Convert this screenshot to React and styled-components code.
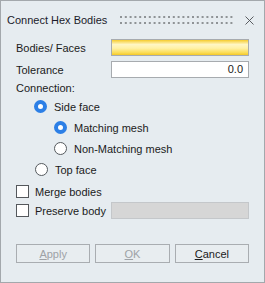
import React from "react";
import styled, { createGlobalStyle } from "styled-components";

const Global = createGlobalStyle`
  html, body { margin: 0; padding: 0; background: #e6ecf0; }
  * { box-sizing: border-box; }
`;

const Window = styled.div`
  width: 265px;
  height: 283px;
  border: 1px solid #a3a8ac;
  background: #e6ecf0;
  font-family: "Liberation Sans", Arial, sans-serif;
  font-size: 11px;
  color: #1b1b1b;
  display: flex;
  flex-direction: column;
`;

const TitleBar = styled.div`
  height: 38px;
  display: flex;
  align-items: center;
  padding: 0 10px 0 6px;
`;

const Title = styled.div`
  font-size: 11px;
  color: #1b1b2b;
`;

const Grip = styled.svg`
  margin-left: auto;
  margin-right: 12px;
  flex: none;
`;

const Close = styled.svg`
  flex: none;
`;

const Body = styled.div`
  padding: 0 15px;
  display: flex;
  flex-direction: column;
`;

const FieldRow = styled.div`
  display: grid;
  grid-template-columns: 95px 1fr;
  align-items: center;
  height: 17px;
  margin-top: ${(p) => p.$mt || 0}px;
`;

const Label = styled.div`
  white-space: nowrap;
`;

const Field = styled.div`
  height: 17px;
  border: 1px solid ${(p) => (p.$variant === "disabled" ? "#c4c7ca" : "#a7abaf")};
  background: ${(p) =>
    p.$variant === "pick"
      ? "linear-gradient(#f6cc2e 0%, #fff6c4 30%, #fff1a6 55%, #fbdc55 85%, #f4c828 100%)"
      : p.$variant === "disabled"
      ? "#d6d6d6"
      : "#ffffff"};
  text-align: right;
  padding-right: 5px;
  line-height: 15px;
`;

const TextRow = styled.div`
  height: 17px;
  margin-top: 1px;
  display: flex;
  align-items: center;
`;

const OptionRow = styled.label`
  height: 21px;
  display: flex;
  align-items: center;
  gap: 7px;
  padding-left: ${(p) => p.$indent}px;
`;

const RadioDot = styled.span`
  width: 13px;
  height: 13px;
  border-radius: 50%;
  flex: none;
  ${(p) =>
    p.$checked
      ? `background: #fff; border: 4px solid #2c7fe6;`
      : `background: #fff; border: 1px solid #555a5e;`}
`;

const CheckRow = styled.div`
  height: ${(p) => p.$h}px;
  margin-top: ${(p) => p.$mt || 0}px;
  display: grid;
  grid-template-columns: 95px 1fr;
  align-items: center;
`;

const CheckLabel = styled.span`
  display: flex;
  align-items: center;
  gap: 6px;
  white-space: nowrap;
`;

const Box = styled.span`
  width: 13px;
  height: 13px;
  border: 1px solid #54585c;
  background: #fff;
  flex: none;
`;

const Buttons = styled.div`
  margin-top: 25px;
  display: grid;
  grid-template-columns: repeat(3, 1fr);
  gap: 5px;
`;

const Button = styled.button`
  height: 19px;
  border: 1px solid #a9adb1;
  background: #e8edf0;
  font-family: inherit;
  font-size: 11px;
  color: ${(p) => (p.disabled ? "#9ea2a6" : "#1b1b1b")};
  padding: 0;
  u { text-decoration: underline; text-underline-offset: 1px; }
`;

function GripDots() {
  const dots = [];
  for (let i = 0; i < 24; i++) {
    const x = i * 4.8;
    dots.push(<rect key={"a" + i} x={x} y={0} width={2} height={2} fill="#8f9396" />);
    dots.push(<rect key={"b" + i} x={x} y={6} width={2} height={2} fill="#8f9396" />);
  }
  return (
    <Grip width="113" height="8" viewBox="0 0 113 8">
      {dots}
    </Grip>
  );
}

export default function App() {
  return (
    <>
      <Global />
      <Window>
        <TitleBar>
          <Title>Connect Hex Bodies</Title>
          <GripDots />
          <Close width="9" height="9" viewBox="0 0 9 9">
            <path d="M0.5 0.5 L8.5 8.5 M8.5 0.5 L0.5 8.5" stroke="#4a4d50" strokeWidth="0.9" />
          </Close>
        </TitleBar>
        <Body>
          <FieldRow>
            <Label>Bodies/ Faces</Label>
            <Field $variant="pick" />
          </FieldRow>
          <FieldRow $mt={5}>
            <Label>Tolerance</Label>
            <Field>0.0</Field>
          </FieldRow>
          <TextRow>Connection:</TextRow>
          <OptionRow $indent={18}>
            <RadioDot $checked />
            Side face
          </OptionRow>
          <OptionRow $indent={38}>
            <RadioDot $checked />
            Matching mesh
          </OptionRow>
          <OptionRow $indent={38}>
            <RadioDot />
            Non-Matching mesh
          </OptionRow>
          <OptionRow $indent={19}>
            <RadioDot />
            Top face
          </OptionRow>
          <CheckRow $h={21} $mt={1}>
            <CheckLabel>
              <Box />
              Merge bodies
            </CheckLabel>
          </CheckRow>
          <CheckRow $h={17}>
            <CheckLabel>
              <Box />
              Preserve body
            </CheckLabel>
            <Field $variant="disabled" />
          </CheckRow>
          <Buttons>
            <Button disabled>
              <u>A</u>pply
            </Button>
            <Button disabled>
              <u>O</u>K
            </Button>
            <Button>
              <u>C</u>ancel
            </Button>
          </Buttons>
        </Body>
      </Window>
    </>
  );
}
